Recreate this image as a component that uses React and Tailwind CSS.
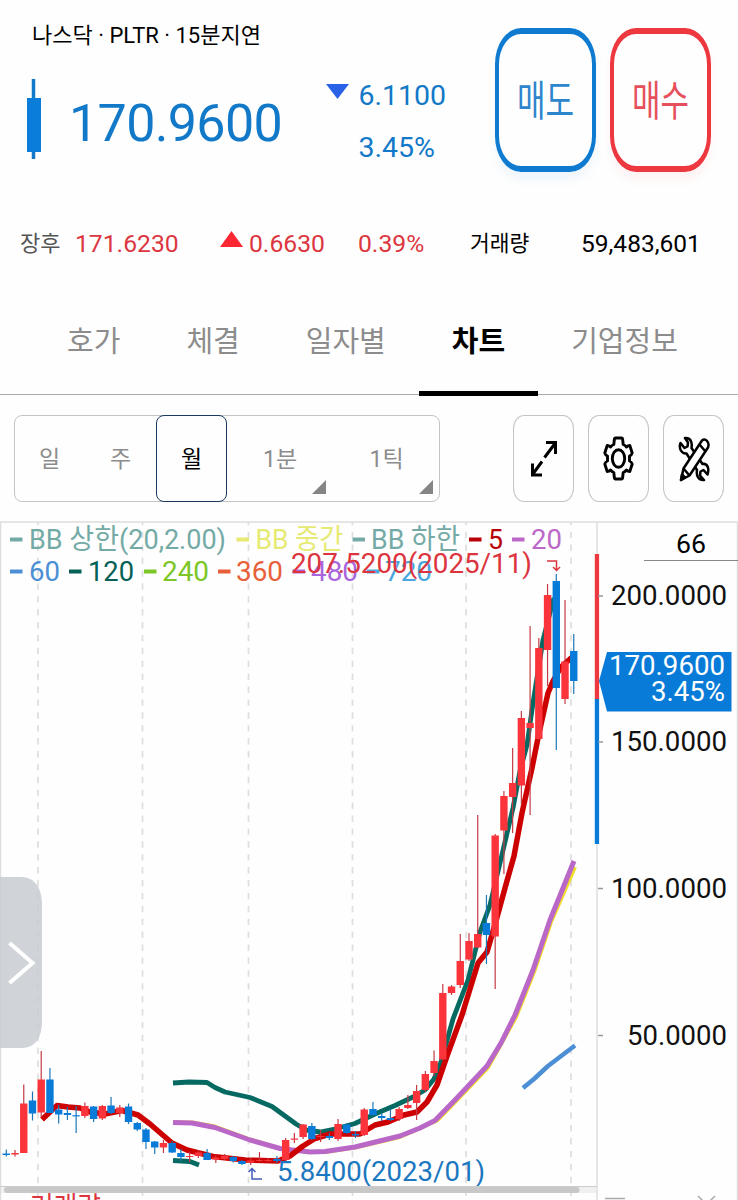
import React from 'react';

const START_X = 6.3;
const STEP = 8.73;

// [high, body top, body bottom, low, color] per month, r = up, b = down
const candles = [
  [1149.5, 1153.5, 1155, 1156.5, 'b'], [1150, 1153, 1154.5, 1156.5, 'r'], [1084.5, 1103.5, 1153, 1153, 'r'],
  [1091.5, 1100.5, 1113.5, 1120.5, 'b'], [1051, 1079.5, 1112.5, 1117, 'r'], [1068, 1079.5, 1113, 1113, 'b'],
  [1105, 1109.5, 1114.5, 1123.5, 'b'], [1107, 1113, 1115, 1120, 'b'], [1106, 1115.2, 1116.4, 1133, 'b'],
  [1102.5, 1106, 1116, 1118, 'r'], [1106, 1106.5, 1119, 1122, 'b'], [1105, 1106, 1118.5, 1120, 'r'],
  [1097, 1105.5, 1113, 1114, 'b'], [1105, 1107.5, 1113, 1117, 'r'], [1103.5, 1106.5, 1122, 1124, 'b'],
  [1122, 1123, 1129.5, 1131, 'b'], [1128, 1129.5, 1142, 1149, 'b'], [1141, 1141.5, 1147.5, 1154, 'b'],
  [1140, 1143, 1147.5, 1153, 'r'], [1141, 1143, 1152.5, 1153, 'b'], [1149, 1153, 1157, 1161, 'b'],
  [1152, 1156, 1157, 1162, 'r'], [1150, 1152.5, 1156, 1158, 'r'], [1149, 1153, 1160, 1160, 'b'],
  [1155, 1157.5, 1159.5, 1163, 'r'], [1154, 1156, 1159, 1160, 'r'], [1156, 1157, 1161, 1162.5, 'b'],
  [1160, 1161, 1164, 1165, 'b'], [1158, 1160.5, 1162.5, 1165, 'r'], [1152, 1160, 1161, 1162, 'r'],
  [1158, 1160, 1161, 1162, 'r'], [1156, 1159, 1161, 1163, 'b'], [1138, 1140, 1160, 1161, 'r'],
  [1133, 1138.5, 1139.7, 1143, 'r'], [1124, 1124.5, 1137, 1139, 'r'], [1123, 1126, 1139, 1140, 'b'],
  [1130, 1136, 1137, 1142, 'r'], [1133, 1136, 1138, 1140, 'b'], [1119, 1124, 1139, 1141, 'r'],
  [1123, 1124.5, 1133, 1134, 'b'], [1131, 1134, 1135.5, 1138, 'b'], [1108, 1109.5, 1135, 1136, 'r'],
  [1102, 1109, 1115, 1116, 'b'], [1113, 1116, 1118, 1121, 'b'], [1109, 1118, 1120, 1121, 'b'],
  [1107, 1109, 1119, 1121, 'r'], [1095, 1105, 1108, 1109, 'r'], [1085, 1091, 1103, 1120, 'r'],
  [1071, 1074, 1090, 1092, 'r'], [1050.5, 1061, 1073, 1076, 'r'], [984, 993, 1059.5, 1060, 'r'],
  [985, 986.5, 993, 995, 'r'], [934, 961, 985, 988, 'r'], [933, 941, 959.5, 961, 'r'],
  [815, 934, 947.5, 948, 'r'], [895, 923, 935, 964, 'b'], [834, 835.5, 936.5, 989, 'r'],
  [791, 796, 830.5, 874, 'r'], [748, 783, 797, 833, 'r'], [711, 718, 785.5, 805, 'r'],
  [626, 723, 728, 815, 'r'], [638, 648, 739, 740, 'r'], [584, 595, 650, 686, 'r'],
  [574, 581, 688, 750, 'b'], [600, 661.5, 699, 704, 'r'], [634, 651, 681, 694, 'b'],
];

const lines = [
  { color: '#066a62', width: 4.8, points: '173,1083 189,1082 207,1082.5 215,1087.5 225,1092 250,1097.5 272,1106.5 296,1124 306,1130 320,1132 335,1129 355,1123.5 375,1114 395,1105.5 413,1097 425,1090 434,1079 441,1062 453,1019 468,980 480,932 490,905 500,863 513,808 520,771 527,745 533,703 543,640 552,605 554,598' },
  { color: '#066a62', width: 4.8, points: '173,1160.5 190,1161.5 199,1165' },
  { color: '#f2dc2c', width: 4, points: '173,1122.5 192,1122.5 215,1126.5 250,1139.5 280,1148.5 310,1152 325,1152 355,1147.5 400,1137 437,1120.5 456,1101 488,1067.5 516,1017 534,972 551,922 575,867' },
  { color: '#b968c7', width: 5, points: '173,1122.5 192,1123 215,1127.5 250,1140 280,1148.5 310,1152 325,1151.5 355,1147 400,1136 420,1128 435,1120.5 455,1100 487,1066 501,1043 515,1015 533,970 550,920 574,861' },
  { color: '#4c8fd4', width: 4.5, points: '523,1088 534,1079 548,1066 575,1045.5' },
  { color: '#cc0000', width: 5.5, points: '42,1119.5 57,1105.5 68,1107 80,1108 90,1112 105,1114 122,1110.5 138,1115 150,1124 172,1143 187,1150 213,1156.5 245,1160 278,1161 290,1156 303,1146 315,1138.5 330,1134 360,1134 375,1125 388,1122 404,1115 417,1112 427,1102 437,1085 447,1056 462,1015 478,963 487,952 496,921 505,888 514,856 522,813 532,768 538,738 548,693 553,681 561,667 570,659 574,656' },
];

const gridX = [38, 142.5, 248.5, 352.5, 466, 571];

const prices = [
  { y: 596, x: 611, w: 116, label: '200.0000' },
  { y: 742, x: 611, w: 116, label: '150.0000' },
  { y: 888.5, x: 611, w: 116, label: '100.0000' },
  { y: 1035.5, x: 627, w: 100, label: '50.0000' },
];

// first and second row of the indicator legend
const legends = [
  { x: 10, y: 549, w: 197, tx: 29, label: 'BB 상한(20,2.00)', color: '#74aaa6' },
  { x: 236.5, y: 549, w: 88, tx: 255.5, label: 'BB 중간', color: '#e6ea72' },
  { x: 352.5, y: 549, w: 89, tx: 371, label: 'BB 하한', color: '#74aaa6' },
  { x: 469, y: 549, w: 15, tx: 488, label: '5', color: '#b80008' },
  { x: 512, y: 549, w: 31, tx: 531, label: '20', color: '#bb68c8' },
  { x: 10, y: 581, w: 31, tx: 29, label: '60', color: '#4c8fd4' },
  { x: 69, y: 581, w: 46, tx: 88, label: '120', color: '#066056' },
  { x: 144, y: 581, w: 47, tx: 162, label: '240', color: '#7cc627' },
  { x: 218, y: 581, w: 47, tx: 236, label: '360', color: '#e8603a' },
  { x: 292.5, y: 581, w: 47, tx: 311, label: '480', color: '#a865dc' },
  { x: 367, y: 581, w: 47, tx: 385, label: '720', color: '#4aa6df' },
];

const tabs = ['호가', '체결', '일자별', '차트', '기업정보'];

const periods = [
  { label: '일', width: 'w-[71px]' },
  { label: '주', width: 'w-[71px]' },
  { label: '월', width: 'w-[71px]', active: true },
  { label: '1분', width: 'w-[106px]', more: true },
  { label: '1틱', width: 'w-[107px]', more: true },
];

const ChartText = ({ x, y, w, color, size = 28, children }) => (
  <text x={x} y={y} fontSize={size} fill={color} textLength={w} lengthAdjust="spacingAndGlyphs">
    {children}
  </text>
);

const TradeButton = ({ label, className }) => (
  <button
    className={`flex h-[144px] w-[101px] items-center justify-center rounded-[26px/36px] border-x-[4.5px] border-y-[6px] text-[31px] ${className}`}
  >
    <span className="scale-y-[1.35] pt-1">{label}</span>
  </button>
);

const ToolButton = ({ children }) => (
  <button className="flex h-[87px] w-[61px] items-center justify-center rounded-[11px/14px] border-[1.5px] border-[#c3c4c9]">
    {children}
  </button>
);

const ExpandIcon = () => (
  <svg width="28" height="38" viewBox="0 0 28 38" fill="none" stroke="#000" strokeWidth="3">
    <path d="M14.500 17.500 25 3.500M16 2.500h9.500V14M12 21.500 2.500 34.500M2.500 23.500V35H12" />
  </svg>
);

const GearIcon = () => (
  <svg width="31" height="45" viewBox="0 0 31 45" fill="none" stroke="#000" strokeWidth="2.900" strokeLinejoin="round">
    <path d="M12.500 2h6q1 0 1.200 2l.5 4.500q2 .8 3.300 2.500 1.500-1.500 3.300-1.500L29.200 17q-.5 2-2.700 3v5q2.200 1 2.700 3l-2.400 7.500q-1.800 0-3.300-1.500-1.300 1.700-3.300 2.500l-.5 4.500q-.2 2-1.200 2h-6q-1 0-1.200-2l-.5-4.500q-2-.8-3.300-2.500-1.500 1.500-3.300 1.500L1.800 28q.5-2 2.700-3v-5q-2.200-1-2.700-3l2.400-7.500q1.800 0 3.300 1.500 1.300-1.700 3.300-2.500l.5-4.500q.2-2 1.200-2z" />
    <ellipse cx="15.500" cy="22.500" rx="6.200" ry="8.800" />
  </svg>
);

const ToolsIcon = () => (
  <svg width="32" height="46" viewBox="0 0 32 46" fill="none" stroke="#000" strokeWidth="2.500" strokeLinejoin="round">
    <path d="M7 2c5.500-.5 7.500 4 6.500 10l11 16c5-1 7 4.500 5 10.500L25.500 34l-3 1.500-.5 4 4 4.500c-5.500.5-8-4-7-10L8.500 17.500C3.500 18 .5 12.500 2.500 7L6.500 12l3-1.500.500-4z" />
    <path d="M3 44 5.500 32.500 24 4.500c3.500-3 8 2 6 7L11.500 39.500z" fill="#fff" />
    <path d="M5.500 32.500l6 7M21.500 8.500l6 7" />
    <path d="M3 44l1-5.500 3 3z" fill="#000" />
  </svg>
);

const Header = () => (
  <header className="flex h-[308px] flex-col">
    <div className="flex h-[208px] justify-between pr-[27px]">
      <div className="pl-8 pt-5">
        <p className="h-8 whitespace-nowrap text-[22px] leading-8 text-black">나스닥 · PLTR · 15분지연</p>
        <div className="mt-7 flex text-[#1279c8]">
          <svg width="16" height="80" viewBox="0 0 16 80" className="-ml-[6px] -mt-px">
            <path d="M7.500 0v80" stroke="#1279c8" strokeWidth="3.500" />
            <path d="M1 19h14v54H1z" fill="#0a7cda" />
          </svg>
          <p className="ml-[27px] mt-[11.500px] w-[257px] text-[52px] leading-[64px] tracking-[-0.65px]">170.9600</p>
          <svg width="23" height="15" viewBox="0 0 23 15" className="mt-1">
            <path d="M0 0h23L11.500 15z" fill="#2962e6" />
          </svg>
          <div className="ml-[9.500px] text-[28.500px] leading-[52px]">
            <p className="-mt-[10px]">6.1100</p>
            <p>3.45%</p>
          </div>
        </div>
      </div>
      <div className="flex gap-[14px] pt-7">
        <TradeButton label="매도" className="border-[#0f7bd0] text-[#2d85cc] shadow-[0_8px_10px_rgba(15,123,208,0.06)]" />
        <TradeButton label="매수" className="border-[#ee3840] text-[#e5505a] shadow-[0_8px_10px_rgba(238,56,64,0.06)]" />
      </div>
    </div>
    <div className="flex items-center whitespace-nowrap pl-5 pt-0.5 leading-[68px] text-[#dc3640]">
      <span className="w-[55px] text-[22px] text-[#555]">장후</span>
      <span className="w-[145px] text-[24.700px]">171.6230</span>
      <svg width="23" height="16" viewBox="0 0 23 16" className="-mt-2.5">
        <path d="M0 16h23L11.500 0z" fill="#fb2833" />
      </svg>
      <span className="ml-[6px] w-[109px] text-[24.700px]">0.6630</span>
      <span className="w-[112px] text-[24.700px]">0.39%</span>
      <span className="w-[111px] text-[21.500px] text-black">거래량</span>
      <span className="text-[24.500px] text-black">59,483,601</span>
    </div>
  </header>
);

const TabBar = () => (
  <nav className="flex h-[87px] border-b-[1.5px] border-[#aaa] pl-[34px] text-[29px]">
    {tabs.map(tab => (
      <button
        key={tab}
        className={`-mb-[1.5px] whitespace-nowrap px-[33px] ${
          tab === '차트' ? 'border-b-[5px] border-black pb-[14px] font-bold text-black' : 'pb-[19px] text-[#8c8c8c]'
        }`}
      >
        {tab}
      </button>
    ))}
  </nav>
);

const Toolbar = () => (
  <div className="flex h-[126px] items-start gap-[14px] pl-[14px] pt-5">
    <div className="mr-[59px] flex h-[87px] w-[426px] rounded-lg border border-[#c4c4c4] text-[23px] text-[#8c8c8c]">
      {periods.map(({ label, width, active, more }) => (
        <button
          key={label}
          className={`relative -my-px shrink-0 pt-1 first:-ml-px ${width} ${
            active ? 'rounded-lg border-[1.5px] border-[#1c3a60] text-black' : ''
          }`}
        >
          {label}
          {more && (
            <svg width="14" height="14" viewBox="0 0 14 14" className="absolute bottom-2 right-[7px]">
              <path d="M14 0v14H0z" fill="#858585" />
            </svg>
          )}
        </button>
      ))}
    </div>
    <ToolButton><ExpandIcon /></ToolButton>
    <ToolButton><GearIcon /></ToolButton>
    <ToolButton><ToolsIcon /></ToolButton>
  </div>
);

const Chart = () => (
  <svg width="738" height="679" viewBox="0 521 738 679" className="block">
    <path d="M0 522h738M.5 522v678M737.500 522v678" stroke="#ddd" strokeWidth="1.500" fill="none" />
    <path d="M597 522v678" stroke="#dedede" strokeWidth="1.500" />
    {gridX.map(x => (
      <path key={x} d={`M${x} 522v678`} stroke="#dedede" strokeWidth="1.700" strokeDasharray="6.400 6.500" strokeDashoffset="3.200" />
    ))}

    {lines.map((line, i) => (
      <polyline key={i} points={line.points} fill="none" stroke={line.color} strokeWidth={line.width} strokeLinejoin="round" />
    ))}

    {candles.map(([high, top, bottom, low, color], i) => {
      const x = START_X + STEP * i;
      const up = color === 'r';
      return (
        <g key={i}>
          <path d={`M${x} ${high}V${low}`} stroke={up ? '#c63a45' : '#1b78b8'} strokeWidth="1.200" />
          <rect x={x - 3.7} y={top} width="7.400" height={bottom - top} fill={up ? '#fb343b' : '#087bd9'} />
        </g>
      );
    })}

    {legends.map(item => (
      <g key={item.label}>
        <rect x={item.x} y={item.y - 11.5} width="12.500" height="4" fill={item.color} />
        <ChartText x={item.tx} y={item.y} w={item.w} color={item.color}>{item.label}</ChartText>
      </g>
    ))}

    {/* highest / lowest markers */}
    <ChartText x="291" y="573" w="241" color="#dc3540">207.5200(2025/11)</ChartText>
    <path d="M547 561h9.500v9M553 567l3.500 3.500 3.500-3.500" fill="none" stroke="#dc3540" strokeWidth="1.500" />
    <ChartText x="277" y="1181" w="208" color="#1b78c0">5.8400(2023/01)</ChartText>
    <path d="M262 1179h-10v-10M248.500 1172l3.500-3.500 3.500 3.500" fill="none" stroke="#4459b8" strokeWidth="1.500" />

    {/* price axis */}
    <rect x="594.800" y="554" width="4.300" height="145" fill="#ee3840" />
    <rect x="594.800" y="699" width="4.300" height="145" fill="#087bd9" />
    <ChartText x="676" y="553" w="30" size={25.5} color="#000">66</ChartText>
    <path d="M644 560.500h94" stroke="#888" />
    {prices.map(price => (
      <g key={price.label}>
        <path d={`M598 ${price.y}h5`} stroke="#999" strokeWidth="1.500" />
        <ChartText x={price.x} y={price.y + 9} w={price.w} color="#111">{price.label}</ChartText>
      </g>
    ))}
    <path d="M599 681l8-29h124.500v59.500H607z" fill="#087bd9" />
    <ChartText x="609" y="675" w="116" color="#fff">170.9600</ChartText>
    <ChartText x="651" y="701" w="74" color="#fff">3.45%</ChartText>

    {/* volume panel */}
    <path d="M0 1186.500h597" stroke="#ccc" />
    <path d="M1 1190h595" stroke="#f0f0f0" strokeWidth="6" />
    <path d="M7 1190h569.500" stroke="#c8c8c8" strokeWidth="6" strokeLinecap="round" />
    <ChartText x="30" y="1217" w="71" color="#dc3540">거래량</ChartText>
    <path d="M605 1198.500h20M698 1196l15 15M715 1196l-15 15" stroke="#aaa" strokeWidth="1.500" />

    {/* side drawer handle */}
    <path d="M0 877h21c14 0 21 11 21 28v116c0 17-7 27-21 27H0z" fill="#c8ccd2" fillOpacity=".85" />
    <path d="M9.500 943l23 20-23 20" fill="none" stroke="#fff" strokeWidth="4" />
  </svg>
);

const App = () => {
  return (
    <div
      className="h-[1200px] w-[738px] overflow-hidden bg-[#fefefe] font-['Roboto','Noto_Sans_CJK_KR',sans-serif]"
      lang="ko"
    >
      <Header />
      <TabBar />
      <Toolbar />
      <Chart />
    </div>
  );
};

export default App;
